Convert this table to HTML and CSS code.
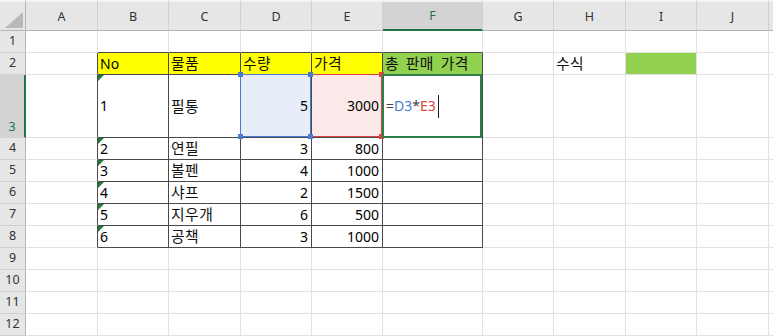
FILE: index.html
```html
<!DOCTYPE html>
<html lang="ko">
<head>
<meta charset="utf-8">
<link rel="stylesheet" href="styles.css">
</head>
<body>
<div class="sheet">
  <!-- header row -->
  <div class="c corner"><svg class="corner-tri" width="26" height="31" viewBox="0 0 26 31"><polygon points="23,12 23,28 5,28" fill="#b9b9b9"/></svg></div>
  <div class="c h">A</div>
  <div class="c h">B</div>
  <div class="c h">C</div>
  <div class="c h">D</div>
  <div class="c h">E</div>
  <div class="c h h-sel">F</div>
  <div class="c h">G</div>
  <div class="c h">H</div>
  <div class="c h">I</div>
  <div class="c h">J</div>
  <div class="c h h-end"></div>

  <!-- row 1 -->
  <div class="c r">1</div>
  <div class="c"></div>
  <div class="c tb"></div>
  <div class="c tb"></div>
  <div class="c tb"></div>
  <div class="c tb"></div>
  <div class="c tb"></div>
  <div class="c"></div>
  <div class="c"></div>
  <div class="c"></div>
  <div class="c"></div>
  <div class="c"></div>

  <!-- row 2 -->
  <div class="c r">2</div>
  <div class="c tl"></div>
  <div class="c t yellow">No</div>
  <div class="c t yellow ko">물품</div>
  <div class="c t yellow ko">수량</div>
  <div class="c t yellow ko">가격</div>
  <div class="c t green ko wide">총 판매 가격</div>
  <div class="c"></div>
  <div class="c ko">수식</div>
  <div class="c green-fill"></div>
  <div class="c"></div>
  <div class="c"></div>

  <!-- row 3 -->
  <div class="c r r-sel">3</div>
  <div class="c tl"></div>
  <div class="c t flag">1</div>
  <div class="c t ko">필통</div>
  <div class="c t num ref-blue">5<span class="box box-blue"><i class="k tl-k"></i><i class="k tr-k"></i><i class="k bl-k"></i><i class="k br-k"></i></span></div>
  <div class="c t num ref-red">3000<span class="box box-red"><i class="k tr-k"></i><i class="k br-k"></i></span></div>
  <div class="c t formula"><span class="f-op">=</span><span class="f-blue">D3</span><span class="f-op">*</span><span class="f-red">E3</span><span class="caret"></span><span class="box box-active"></span></div>
  <div class="c"></div>
  <div class="c"></div>
  <div class="c"></div>
  <div class="c"></div>
  <div class="c"></div>

  <!-- row 4 -->
  <div class="c r">4</div>
  <div class="c tl"></div>
  <div class="c t flag">2</div>
  <div class="c t ko">연필</div>
  <div class="c t num">3</div>
  <div class="c t num">800</div>
  <div class="c t"></div>
  <div class="c"></div>
  <div class="c"></div>
  <div class="c"></div>
  <div class="c"></div>
  <div class="c"></div>

  <!-- row 5 -->
  <div class="c r">5</div>
  <div class="c tl"></div>
  <div class="c t flag">3</div>
  <div class="c t ko">볼펜</div>
  <div class="c t num">4</div>
  <div class="c t num">1000</div>
  <div class="c t"></div>
  <div class="c"></div>
  <div class="c"></div>
  <div class="c"></div>
  <div class="c"></div>
  <div class="c"></div>

  <!-- row 6 -->
  <div class="c r">6</div>
  <div class="c tl"></div>
  <div class="c t flag">4</div>
  <div class="c t ko">샤프</div>
  <div class="c t num">2</div>
  <div class="c t num">1500</div>
  <div class="c t"></div>
  <div class="c"></div>
  <div class="c"></div>
  <div class="c"></div>
  <div class="c"></div>
  <div class="c"></div>

  <!-- row 7 -->
  <div class="c r">7</div>
  <div class="c tl"></div>
  <div class="c t flag">5</div>
  <div class="c t ko">지우개</div>
  <div class="c t num">6</div>
  <div class="c t num">500</div>
  <div class="c t"></div>
  <div class="c"></div>
  <div class="c"></div>
  <div class="c"></div>
  <div class="c"></div>
  <div class="c"></div>

  <!-- row 8 -->
  <div class="c r">8</div>
  <div class="c tl"></div>
  <div class="c t flag">6</div>
  <div class="c t ko">공책</div>
  <div class="c t num">3</div>
  <div class="c t num">1000</div>
  <div class="c t"></div>
  <div class="c"></div>
  <div class="c"></div>
  <div class="c"></div>
  <div class="c"></div>
  <div class="c"></div>

  <!-- row 9 -->
  <div class="c r">9</div>
  <div class="c"></div><div class="c"></div><div class="c"></div><div class="c"></div><div class="c"></div><div class="c"></div><div class="c"></div><div class="c"></div><div class="c"></div><div class="c"></div><div class="c"></div>

  <!-- row 10 -->
  <div class="c r">10</div>
  <div class="c"></div><div class="c"></div><div class="c"></div><div class="c"></div><div class="c"></div><div class="c"></div><div class="c"></div><div class="c"></div><div class="c"></div><div class="c"></div><div class="c"></div>

  <!-- row 11 -->
  <div class="c r">11</div>
  <div class="c"></div><div class="c"></div><div class="c"></div><div class="c"></div><div class="c"></div><div class="c"></div><div class="c"></div><div class="c"></div><div class="c"></div><div class="c"></div><div class="c"></div>

  <!-- row 12 -->
  <div class="c r">12</div>
  <div class="c"></div><div class="c"></div><div class="c"></div><div class="c"></div><div class="c"></div><div class="c"></div><div class="c"></div><div class="c"></div><div class="c"></div><div class="c"></div><div class="c"></div>
</div>
</body>
</html>
```

FILE: styles.css
```css
html, body {
  margin: 0;
  padding: 0;
  background: #ffffff;
  overflow: hidden;
}

.sheet {
  display: grid;
  grid-template-columns: 26px 72px 71px 72px 71px 71px 100px 71px 72px 71px 72px 1fr;
  grid-template-rows: 31px 22px 22px 63px repeat(9, 22px);
  width: 773px;
  height: 336px;
  font-family: "Noto Sans", "Noto Sans CJK KR", sans-serif;
  font-size: 14px;
  color: #000;
}

.c {
  box-sizing: border-box;
  position: relative;
  display: flex;
  align-items: center;
  padding: 0 2px;
  border-right: 1px solid #e1e1e1;
  border-bottom: 1px solid #e1e1e1;
  white-space: nowrap;
  line-height: 1;
}

.ko {
  font-family: "Noto Sans CJK KR", "Noto Sans", sans-serif;
  font-size: 14.8px;
  letter-spacing: 0.5px;
  color: #111;
}

.wide {
  word-spacing: 2px;
}

/* column headers */
.h, .corner {
  background: #e6e6e6;
  border-top: 2px solid #f4f4f4;
  border-right: 1px solid #d0d0d0;
  border-bottom: 1px solid #b5b5b5;
  justify-content: center;
  font-size: 12.5px;
  color: #333;
  padding-top: 2px;
}

.corner {
  padding: 0;
  border-right: 1px solid #b5b5b5;
}

.corner-tri {
  position: absolute;
  left: 0;
  top: -2px;
}

.h-end {
  border-right: none;
}

.h-sel {
  background: #d3d3d3;
  color: #217346;
  border-bottom: 2px solid #217346;
}

/* row headers */
.r {
  background: #e6e6e6;
  border-right: 1px solid #b5b5b5;
  border-bottom: 1px solid #d0d0d0;
  justify-content: center;
  font-size: 12.5px;
  color: #333;
  padding: 0;
}

.r-sel {
  background: #d3d3d3;
  color: #217346;
  border-right: 2px solid #217346;
  align-items: flex-end;
  padding-bottom: 4px;
}

/* table borders */
.t {
  border-right: 1px solid #4a4a4a;
  border-bottom: 1px solid #4a4a4a;
}

.tb {
  border-bottom: 1px solid #4a4a4a;
}

.tl {
  border-right: 1px solid #4a4a4a;
}

.yellow {
  background: #ffff00;
}

.green {
  background: #92d050;
}

.green-fill {
  background: #92d050;
}

.num {
  justify-content: flex-end;
  padding-right: 3px;
}

/* "number stored as text" indicator */
.flag::before {
  content: "";
  position: absolute;
  left: 0;
  top: 0;
  width: 0;
  height: 0;
  border-top: 6px solid #1f7a3a;
  border-right: 6px solid transparent;
}

/* formula references */
.ref-blue {
  background: #e8eef9;
}

.ref-red {
  background: #fbe9e9;
}

.box {
  position: absolute;
  box-sizing: border-box;
  pointer-events: none;
}

.box-blue {
  top: -1px;
  left: -1px;
  right: 0;
  bottom: 0;
  border: 1px solid #4a7bd0;
  z-index: 3;
}

.box-red {
  top: -1px;
  left: 0;
  right: 0;
  bottom: 0;
  border: 1px solid #d9453f;
  border-left: none;
  z-index: 2;
}

.box-active {
  top: -1px;
  left: -1px;
  right: 0;
  bottom: -1px;
  border: 2px solid #2e7d4a;
  z-index: 2;
}

.k {
  position: absolute;
  width: 5px;
  height: 5px;
}

.box-blue .k { background: #4a7bd0; }
.box-red .k { background: #d9453f; }

.tl-k { left: -3px; top: -3px; }
.tr-k { right: -3px; top: -3px; }
.bl-k { left: -3px; bottom: -3px; }
.br-k { right: -3px; bottom: -3px; }

.formula {
  padding-left: 3px;
}

.f-op { color: #444; }
.f-blue { color: #4a7bd0; }
.f-red { color: #d9453f; }

.caret {
  display: inline-block;
  width: 1px;
  height: 23px;
  background: #222;
  margin-left: 2px;
}
```
